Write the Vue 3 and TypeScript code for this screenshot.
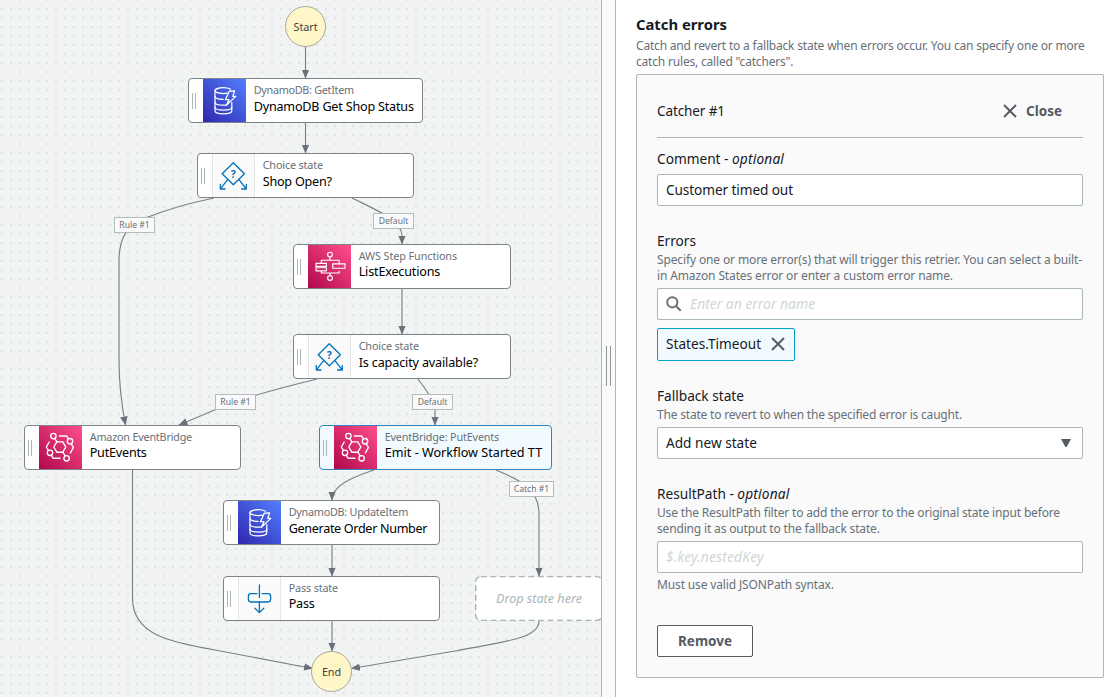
<script setup lang="ts">
type Icon = 'dynamo' | 'choice' | 'steps' | 'bridge' | 'pass'

interface FlowNode {
  id: string
  x: number
  y: number
  w: number
  icon: Icon
  kind: string
  title: string
  kindTrack: number
  titleTrack: number
  selected?: boolean
}

const nodes: FlowNode[] = [
  { id: 'get', x: 188, y: 78, w: 235, icon: 'dynamo', kind: 'DynamoDB: GetItem', title: 'DynamoDB Get Shop Status', kindTrack: -0.28, titleTrack: -0.2 },
  { id: 'open', x: 197, y: 153, w: 217, icon: 'choice', kind: 'Choice state', title: 'Shop Open?', kindTrack: -0.15, titleTrack: -0.22 },
  { id: 'list', x: 293, y: 244, w: 218, icon: 'steps', kind: 'AWS Step Functions', title: 'ListExecutions', kindTrack: -0.08, titleTrack: -0.18 },
  { id: 'capacity', x: 293, y: 334, w: 218, icon: 'choice', kind: 'Choice state', title: 'Is capacity available?', kindTrack: -0.15, titleTrack: -0.15 },
  { id: 'put', x: 24, y: 425, w: 217, icon: 'bridge', kind: 'Amazon EventBridge', title: 'PutEvents', kindTrack: -0.2, titleTrack: -0.2 },
  { id: 'emit', x: 319, y: 425, w: 233, icon: 'bridge', kind: 'EventBridge: PutEvents', title: 'Emit - Workflow Started TT', kindTrack: -0.16, titleTrack: 0.02, selected: true },
  { id: 'order', x: 223, y: 500, w: 217, icon: 'dynamo', kind: 'DynamoDB: UpdateItem', title: 'Generate Order Number', kindTrack: -0.25, titleTrack: -0.33 },
  { id: 'pass', x: 223, y: 576, w: 217, icon: 'pass', kind: 'Pass state', title: 'Pass', kindTrack: -0.15, titleTrack: -0.2 },
]

const edges: string[] = [
  'M305.5 47V78',
  'M305.5 123V153',
  'M214 198C185 204 166 210 148 217C127 226 119 236 119 262V360C119 385 121 402 125.5 425',
  'M352 198C376 210 402 220 402 236V244',
  'M402 289V334',
  'M317 379C280 388 246 397 224 406L179 425',
  'M418 379C427 391 435 402 435 412V425',
  'M374 470C350 478 332 486 332 500',
  'M496 470C520 480 539 488 539 514V576',
  'M332 545V576',
  'M332 621V651',
  'M132.5 470V598C132.5 634 168 642 215 650L312.5 668.5',
  'M539 621C539 638 508 641 455 651L351.5 668.5',
]

const tags = [
  { x: 114, y: 217, w: 41, text: 'Rule #1' },
  { x: 373, y: 213, w: 41, text: 'Default' },
  { x: 215, y: 394, w: 41, text: 'Rule #1' },
  { x: 412, y: 394, w: 41, text: 'Default' },
  { x: 509, y: 481, w: 45, text: 'Catch #1' },
]
</script>

<template>
  <div class="app">
    <section class="canvas">
      <svg class="edges" width="601" height="697" viewBox="0 0 601 697">
        <defs>
          <marker id="arrow" markerUnits="userSpaceOnUse" markerWidth="9" markerHeight="8" refX="8.5" refY="3.75" orient="auto">
            <path d="M0 0L9 3.75L0 7.5Z" fill="#687078" />
          </marker>
        </defs>
        <path v-for="d in edges" :key="d" :d="d" fill="none" stroke="#7b8088" stroke-width="1.15" marker-end="url(#arrow)" />
      </svg>

      <div class="terminal start">Start</div>
      <div class="terminal end">End</div>

      <div
        v-for="n in nodes"
        :key="n.id"
        class="node"
        :class="{ selected: n.selected }"
        :style="{ left: n.x + 'px', top: n.y + 'px', width: n.w + 'px' }"
      >
        <span class="grip"></span>
        <span class="tile" :class="n.icon">
          <svg width="43" height="43" viewBox="0 0 43 43" fill="none" stroke-linejoin="round" stroke-linecap="round">
            <g v-if="n.icon === 'dynamo'" stroke="#fff" stroke-width="1.25">
              <path d="M27.6 10.2C25.8 9.2 23.2 8.7 20.4 8.7C15.7 8.7 12 10 12 11.6S15.7 14.5 20.4 14.5C21.9 14.5 23.2 14.4 24.4 14.1" />
              <path d="M12 11.6V31.8C12 33.6 15.7 34.9 20.4 34.9S28.8 33.6 28.8 31.8V23.6" />
              <path d="M12 17.6C12 19.2 15.4 20.3 20.2 20.4M12 23.3C12 25 15.7 26.2 20.4 26.2C21.4 26.2 22.2 26.2 23 26.1M12 28.2C12 29.9 15.7 31 20.4 31C24.8 31 28.8 29.9 28.8 28.2" />
              <path d="M26.3 12.2L31.6 11.8L29.8 17.4H32.8L23.4 26.2L26 20.7H22.4Z" />
            </g>
            <g v-else-if="n.icon === 'choice'" stroke="#0073bb" stroke-width="1.3">
              <path d="M21.3 8.7L32.4 19.7L21.3 30.7L10.2 19.7Z" />
              <path d="M15.4 25.8L8.6 34.7M8.3 30.3V35H13M27.2 25.8L34 34.7M34.3 30.3V35H29.6" />
              <text x="21.3" y="23.7" text-anchor="middle" class="question">?</text>
            </g>
            <g v-else-if="n.icon === 'steps'" stroke="#fff" stroke-width="1.15">
              <circle cx="22" cy="9.6" r="2.4" />
              <circle cx="22" cy="33" r="2.4" />
              <path d="M22 12V15.2M13.3 18.3V15.2H31.2V18.8M13.3 25.8V28H31.2V26.4M22 28V30.6" />
              <path d="M8 18.3H18.4V21.4H8ZM8 22.7H18.4V25.8H8ZM24.7 18.8H37V23.2H24.7Z" />
            </g>
            <g v-else-if="n.icon === 'bridge'" stroke="#fff" stroke-width="1.35">
              <path d="M14.8 21L17.8 15.8H23.8L26.8 21L23.8 26.2H17.8Z" />
              <circle cx="14.4" cy="10" r="2.7" />
              <circle cx="31" cy="15.2" r="2.7" />
              <circle cx="11" cy="26.8" r="2.7" />
              <circle cx="27.6" cy="32.3" r="2.7" />
              <path d="M15.8 12.4L17.8 15.8M23.8 26.2L26.2 29.9M20.4 10H27.6L29.5 12.8M32.2 17.8L34.4 21.4L31.4 27M10.2 16L7.3 21L9.4 24.4M12.4 29.3L14 32.2H21" />
            </g>
            <g v-else stroke="#0073bb" stroke-width="1.3">
              <path d="M19 16.6H13C11.3 16.6 10.4 17.5 10.4 19V22.6C10.4 24.1 11.3 25 13 25H30C31.7 25 32.6 24.1 32.6 22.6V19C32.6 17.5 31.7 16.6 30 16.6H24" />
              <path d="M21.4 8V20.3M21.4 25V35.4M17 31.3L21.4 35.6L25.8 31.3" />
            </g>
          </svg>
        </span>
        <span class="texts">
          <span class="kind" :style="{ letterSpacing: n.kindTrack + 'px' }">{{ n.kind }}</span>
          <span class="title" :class="n.icon" :style="{ letterSpacing: n.titleTrack + 'px' }">{{ n.title }}</span>
        </span>
      </div>

      <div class="drop">
        <svg width="128" height="45" viewBox="0 0 128 45">
          <rect x="0.75" y="0.75" width="126.5" height="43.5" rx="5" fill="#fff" stroke="#95a5a6" stroke-width="1.2" stroke-dasharray="6 3.5" />
        </svg>
        <span>Drop state here</span>
      </div>

      <div v-for="t in tags" :key="t.x" class="tag" :style="{ left: t.x + 'px', top: t.y + 'px', width: t.w + 'px' }">{{ t.text }}</div>
    </section>

    <div class="splitter"><i></i></div>

    <aside class="panel">
      <h2>Catch errors</h2>
      <p class="desc intro">Catch and revert to a fallback state when errors occur. You can specify one or more<br />catch rules, called "catchers".</p>

      <div class="card">
        <header>
          <span class="name">Catcher #1</span>
          <button class="close" type="button">
            <svg width="14" height="14" viewBox="0 0 14 14"><path d="M1 1L13 13M13 1L1 13" stroke="#545b64" stroke-width="1.9" /></svg>
            <span>Close</span>
          </button>
        </header>

        <div class="field">
          <label>Comment - <em>optional</em></label>
          <div class="input"><span class="customer">Customer timed out</span></div>
        </div>

        <div class="field">
          <label>Errors</label>
          <p class="desc errors">Specify one or more error(s) that will trigger this retrier. You can select a built-<br />in Amazon States error or enter a custom error name.</p>
          <div class="input search">
            <svg width="16" height="16" viewBox="0 0 16 16" fill="none" stroke="#687078" stroke-width="2"><circle cx="6.3" cy="6.3" r="5.1" /><path d="M10 10L14.7 14.7" /></svg>
            <span class="placeholder">Enter an error name</span>
          </div>
          <div class="token">
            <span>States.Timeout</span>
            <svg width="14" height="14" viewBox="0 0 14 14"><path d="M1 1L13 13M13 1L1 13" stroke="#545b64" stroke-width="1.9" /></svg>
          </div>
        </div>

        <div class="field">
          <label>Fallback state</label>
          <p class="desc">The state to revert to when the specified error is caught.</p>
          <div class="input select">
            <span>Add new state</span>
            <svg width="10" height="8" viewBox="0 0 10 8"><path d="M0 0H10L5.6 8H4.4Z" fill="#545b64" /></svg>
          </div>
        </div>

        <div class="field">
          <label>ResultPath - <em>optional</em></label>
          <p class="desc result">Use the ResultPath filter to add the error to the original state input before<br />sending it as output to the fallback state.</p>
          <div class="input"><span class="placeholder path">$.key.nestedKey</span></div>
          <p class="desc hint">Must use valid JSONPath syntax.</p>
        </div>

        <button class="remove" type="button">Remove</button>
      </div>
    </aside>
  </div>
</template>

<style>
body {
  background: #fff;
  overflow: hidden;
}
</style>

<style scoped>
.app {
  display: flex;
  width: 1118px;
  height: 697px;
  overflow: hidden;
  font-family: "Noto Sans", "Open Sans", sans-serif;
  color: #16191f;
}
.app * {
  box-sizing: border-box;
}
.canvas {
  position: relative;
  flex: 0 0 601px;
  overflow: hidden;
  background-color: #f2f3f3;
  background-image: conic-gradient(from 270deg at 2px 2px, #e1e4e4 90deg, transparent 0);
  background-size: 9px 9px;
  background-position: 1px 8px;
}
.edges {
  position: absolute;
  inset: 0;
}
.terminal {
  position: absolute;
  width: 41px;
  height: 41px;
  border: 1px solid #a5a89f;
  border-radius: 50%;
  background: #fff7c8;
  color: #3b3e40;
  font-size: 10.8px;
  line-height: 39px;
  letter-spacing: -0.05px;
  text-align: center;
}
.start {
  left: 285px;
  top: 6px;
}
.end {
  left: 311px;
  top: 651px;
}
.node {
  position: absolute;
  display: flex;
  height: 45px;
  border: 1px solid #7d838b;
  border-radius: 4px;
  background: #fff;
}
.grip {
  flex: 0 0 14px;
  padding: 14px 0 0 3px;
}
.grip::before {
  content: "";
  display: block;
  width: 2px;
  height: 16px;
  border: solid #aab7b8;
  border-width: 0 1px;
}
.tile {
  flex: 0 0 43px;
  height: 43px;
}
.tile svg {
  display: block;
}
.tile.dynamo {
  background: linear-gradient(45deg, #2e27ad, #527fff);
}
.tile.steps,
.tile.bridge {
  background: linear-gradient(45deg, #b0084d, #ff4f8b);
}
.tile.choice,
.tile.pass {
  background: #fafafa;
  box-shadow: inset 1px 0 #e3e7e7, inset -1px 0 #e3e7e7;
}
.question {
  font-size: 10.5px;
  font-weight: 700;
  fill: #0073bb;
  stroke: none;
}
.texts {
  display: flex;
  flex-direction: column;
  padding: 3px 0 0 7.7px;
  white-space: nowrap;
}
.kind {
  font-size: 10.8px;
  line-height: 16px;
  color: #687078;
}
.title {
  font-size: 12.6px;
  line-height: 16px;
  color: #000;
}
.title.choice,
.title.dynamo {
  line-height: 17px;
}
.title.choice {
  line-height: 18px;
}
.node.selected {
  border-color: #3184c2;
  background: #f1faff;
}
.drop {
  position: absolute;
  left: 475px;
  top: 576px;
  width: 128px;
  height: 45px;
  font-size: 12.6px;
  font-style: italic;
  line-height: 45px;
  text-align: center;
  color: #aab7b8;
}
.drop svg {
  position: absolute;
  left: 0;
  top: 0;
}
.drop span {
  position: relative;
}
.tag {
  position: absolute;
  height: 16px;
  border: 1px solid #b2bdbe;
  background: #fafafa;
  color: #687078;
  font-size: 8.6px;
  line-height: 14px;
  text-align: center;
  white-space: nowrap;
}
.splitter {
  display: flex;
  flex: 0 0 15px;
  align-items: center;
  justify-content: center;
  border: solid #aab7b8;
  border-width: 0 1px;
  background: #fafafa;
}
.splitter i {
  width: 5px;
  height: 40px;
  margin-top: 35px;
  border: solid #879596;
  border-width: 0 1px;
}
.panel {
  flex: 1;
  padding: 13px 14px 0 20px;
}
h2 {
  margin: 0;
  font-size: 14.8px;
  font-weight: 700;
  line-height: 22px;
}
.desc {
  margin: 0;
  font-size: 12px;
  line-height: 16px;
  letter-spacing: -0.19px;
  color: #687078;
  white-space: nowrap;
}
.intro {
  margin: 3px 0 4px;
}
.desc.errors {
  letter-spacing: -0.13px;
}
.desc.result {
  letter-spacing: -0.16px;
}
.desc.hint {
  margin-top: 4px;
  letter-spacing: -0.14px;
}
.card {
  height: 604px;
  padding: 20px;
  border: 1px solid #aab7b8;
  border-radius: 2px;
  background: #fafafa;
}
header {
  display: flex;
  align-items: flex-start;
  justify-content: space-between;
  height: 43px;
  padding-right: 21px;
  margin-bottom: 10px;
  border-bottom: 1px solid #aab7b8;
  line-height: 32px;
}
.name {
  font-size: 13.5px;
  letter-spacing: -0.1px;
}
.close {
  display: flex;
  align-items: center;
  gap: 9px;
  padding: 0;
  border: 0;
  background: none;
  color: #545b64;
  font: 700 13.5px/32px "Noto Sans", sans-serif;
}
.field {
  margin-bottom: 24px;
}
label {
  display: block;
  font-size: 13.7px;
  line-height: 22px;
  letter-spacing: -0.02px;
  white-space: nowrap;
}
label em {
  letter-spacing: 0.18px;
}
label + .input,
.desc + .input {
  margin-top: 4px;
}
.input {
  display: flex;
  align-items: center;
  height: 32px;
  padding: 0 9px 1px 8px;
  border: 1px solid #aab7b8;
  border-radius: 2px;
  background: #fff;
  font-size: 13.65px;
}
.customer {
  letter-spacing: -0.1px;
}
.search {
  gap: 8px;
  padding-left: 8px;
}
.placeholder {
  color: #d0d6d7;
  font-style: italic;
  font-size: 13.9px;
}
.path {
  letter-spacing: 0.15px;
}
.token {
  display: flex;
  align-items: center;
  justify-content: space-between;
  width: 138px;
  height: 33px;
  margin-top: 8px;
  padding: 0 9px 2px 8px;
  border: 1px solid #00a1c9;
  border-radius: 2px;
  background: #f1faff;
  font-size: 13.65px;
}
.select {
  justify-content: space-between;
  padding-right: 11px;
}
.remove {
  display: block;
  width: 96px;
  height: 32px;
  margin-top: 32px;
  padding: 0;
  border: 1px solid #545b64;
  border-radius: 2px;
  background: #fff;
  color: #545b64;
  font: 700 13.5px/30px "Noto Sans", sans-serif;
}
</style>
